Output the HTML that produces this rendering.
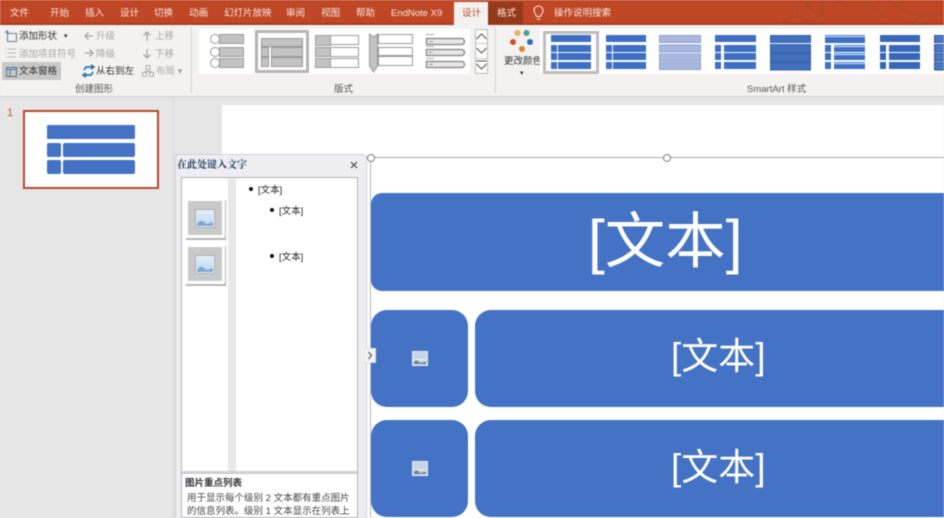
<!DOCTYPE html>
<html lang="zh-CN">
<head>
<meta charset="utf-8">
<title>SmartArt</title>
<style>
html,body{margin:0;padding:0;}
body{width:944px;height:518px;overflow:hidden;position:relative;background:#e6e6e6;font-family:"Liberation Sans","Noto Sans CJK SC",sans-serif;}
#wrap{position:absolute;left:0;top:0;width:944px;height:518px;overflow:hidden;filter:blur(.5px);}
.a{position:absolute;white-space:nowrap;}
.t{position:absolute;top:7px;font-size:9.5px;line-height:13px;color:#fbe6dc;white-space:nowrap;}
.r{position:absolute;font-size:9.5px;line-height:13px;color:#333;white-space:nowrap;}
.g{color:#a8a8a8;}
.lab{position:absolute;top:83px;font-size:9.5px;line-height:13px;color:#555;white-space:nowrap;}
.blk{position:absolute;background:#4472c4;color:#fff;text-align:center;font-family:"Liberation Sans","Noto Sans CJK SC",sans-serif;}
</style>
</head>
<body>
<div id="wrap">
<!-- title bar -->
<div class="a" style="left:0;top:0;width:944px;height:24px;background:#bf4726;"></div>
<div class="a" style="left:0;top:23px;width:944px;height:2px;background:#a63c20;"></div>
<svg class="a" style="left:760px;top:0" width="184" height="24" fill="none" stroke="#ad4829" stroke-width="1.600">
<circle cx="50" cy="8" r="13"/><path d="M46 3l9 9M46 3v6M46 3h6"/><path d="M75 0l12 6h25l12 10M20 24l14-10M128 0l22 14h34M150 24l12-8"/>
</svg>
<div class="a" style="left:454px;top:2px;width:34px;height:23px;background:#f3f2f1;"></div>
<div class="a" style="left:488px;top:2px;width:35px;height:22px;background:#953a1d;"></div>
<div class="t" style="left:10px">文件</div>
<div class="t" style="left:50px">开始</div>
<div class="t" style="left:85px">插入</div>
<div class="t" style="left:120px">设计</div>
<div class="t" style="left:154px">切换</div>
<div class="t" style="left:189px">动画</div>
<div class="t" style="left:224px">幻灯片放映</div>
<div class="t" style="left:286px">审阅</div>
<div class="t" style="left:321px">视图</div>
<div class="t" style="left:356px">帮助</div>
<div class="t" style="left:391px;font-size:9.500px;">EndNote X9</div>
<div class="t" style="left:462px;color:#bf4726">设计</div>
<div class="t" style="left:497px">格式</div>
<svg class="a" style="left:532px;top:5px" width="13" height="16" fill="none" stroke="#fbe6dc" stroke-width="1.100"><path d="M4.500 11.500C4 9 2 8 2 5.500a4.500 4.500 0 0 1 9 0c0 2.500-2 3.500-2.500 6z"/><path d="M5 14h3"/></svg>
<div class="t" style="left:554px">操作说明搜索</div>

<!-- ribbon -->
<div class="a" style="left:0;top:25px;width:944px;height:71px;background:#f3f2f1;"></div>
<div class="a" style="left:0;top:96px;width:944px;height:1px;background:#d2d0ce;"></div>
<div class="a" style="left:191px;top:27px;width:1px;height:66px;background:#d4d4d4;"></div>
<div class="a" style="left:495px;top:27px;width:1px;height:66px;background:#d4d4d4;"></div>
<div class="a" style="left:2px;top:62px;width:59px;height:18px;background:#c8c8c8;"></div>

<svg class="a" style="left:4px;top:29px" width="14" height="50" fill="none" stroke-width="1">
<path d="M3.500 4.500h9v8h-9z" stroke="#6b7f8f"/><path d="M1 3h4M3 1v4" stroke="#3a7ab8"/>
<path d="M1.500 20h1M4 20h8M1.500 24h1M4 24h8M1.500 28h1M4 28h8" stroke="#b5b5b5"/>
<path d="M2.500 38.500h10v9h-10z" stroke="#55707f"/><path d="M2.500 40.500h10M6 41v6" stroke="#3f7cb8"/>
</svg>
<div class="r" style="left:19px;top:30px">添加形状</div>
<div class="r" style="left:64px;top:30px;font-size:7px">▾</div>
<div class="r g" style="left:19px;top:48px">添加项目符号</div>
<div class="r" style="left:19px;top:65px">文本窗格</div>
<svg class="a" style="left:83px;top:29px" width="12" height="30" fill="none" stroke="#a5a5a5" stroke-width="1.300"><path d="M10 7H2M5.500 3.500L2 7l3.500 3.500"/><path d="M2 24h8M6.500 20.500L10 24l-3.500 3.500"/></svg>
<div class="r g" style="left:96px;top:30px">升级</div>
<div class="r g" style="left:96px;top:48px">降级</div>
<svg class="a" style="left:82px;top:64px" width="13" height="15" fill="none" stroke="#2e78b8" stroke-width="1.700"><path d="M12 3H4L2 6M9 1l3 2-3 2"/><path d="M1 11h8l2-3M4 9l-3 2 3 2"/></svg>
<div class="r" style="left:96px;top:65px;color:#333">从右到左</div>
<svg class="a" style="left:142px;top:29px" width="11" height="30" fill="none" stroke="#a5a5a5" stroke-width="1.300"><path d="M5 12V3M1.500 6.500L5 3l3.500 3.500"/><path d="M5 20v9M1.500 25.500L5 29l3.500-3.500"/></svg>
<div class="r g" style="left:155px;top:30px">上移</div>
<div class="r g" style="left:155px;top:48px">下移</div>
<svg class="a" style="left:142px;top:65px" width="12" height="12" fill="none" stroke="#b0b0b0"><path d="M4 .5h4v4H4zM.5 7.500h4v4h-4zM7.500 7.500h4v4h-4zM6 4.500v2M2.500 7.500v-1h7v1"/></svg>
<div class="r g" style="left:156px;top:65px">布局 ▾</div>
<div class="lab" style="left:75px">创建图形</div>
<div class="lab" style="left:334px">版式</div>
<div class="lab" style="left:747px;font-size:9.500px">SmartArt 样式</div>

<!-- layouts gallery -->
<div class="a" style="left:199px;top:29px;width:271px;height:45px;background:#fff;"></div>
<svg class="a" style="left:199px;top:29px" width="271" height="46" stroke="#9a9a9a" stroke-width="1" fill="#c3c3c3">
<g>
<rect x="20.500" y="5.500" width="24" height="9"/><rect x="20.500" y="18.500" width="24" height="9"/><rect x="20.500" y="29.500" width="24" height="9"/>
<circle cx="16" cy="10" r="4.500" fill="#fff"/><circle cx="16" cy="23" r="4.500" fill="#fff"/><circle cx="16" cy="34" r="4.500" fill="#fff"/>
</g>
<rect x="57.500" y="2.500" width="51" height="40" fill="#fff" stroke="#b5b5b5" stroke-width="3"/>
<rect x="62.500" y="9.500" width="41" height="8"/>
<rect x="62.500" y="18.500" width="7" height="9"/><rect x="72.500" y="18.500" width="31" height="9"/>
<rect x="62.500" y="28.500" width="7" height="9"/><rect x="72.500" y="28.500" width="31" height="9"/>
<rect x="116.500" y="6.500" width="15" height="10"/><rect x="116.500" y="18.500" width="15" height="9"/><rect x="116.500" y="29.500" width="15" height="9"/>
<rect x="131.500" y="6.500" width="28" height="9" fill="#fff"/><rect x="131.500" y="18.500" width="28" height="9" fill="#fff"/><rect x="131.500" y="29.500" width="28" height="9" fill="#fff"/>
<path d="M170.500 5l4 3 4-3v32l-4 6-4-6z"/>
<rect x="179.500" y="5.500" width="34" height="9" fill="#fff"/><rect x="179.500" y="18.500" width="34" height="8" fill="#fff"/><rect x="179.500" y="27.500" width="34" height="9" fill="#fff"/>
<g fill="#e8e8e8" stroke="#8f8f8f" stroke-width="1.500">
<path d="M227.500 9.500h35a3 3 0 0 1 0 6h-35zM227.500 20.500h35a3 3 0 0 1 0 6h-35zM227.500 32.500h35a3 3 0 0 1 0 6h-35z"/>
</g>
<path d="M227 5.500h8M227 17.500h8M227 29.500h8" stroke="#aaa"/>
<path d="M230 12.500h4M230 23.500h4M230 35.500h4" stroke="#999"/>
</svg>
<!-- gallery scroller -->
<svg class="a" style="left:475px;top:29px" width="14" height="46" fill="none" stroke="#555" stroke-width="1">
<rect x=".5" y=".5" width="12" height="44" fill="#fbfbfb" stroke="#bcbcbc"/>
<path d="M1 14.500h12M1 29.500h12" stroke="#c9c9c9"/>
<path d="M1.500 10l5-5 5 5M1.500 19l5 5 5-5M1.500 32h10M1.500 35l5 5 5-5"/>
</svg>
<!-- color -->
<svg class="a" style="left:508px;top:27px" width="30" height="26">
<circle cx="9.500" cy="6" r="3" fill="#e8b25c"/><circle cx="18.500" cy="6" r="3" fill="#4fa089"/>
<circle cx="5" cy="15" r="3" fill="#d0502d"/><circle cx="22" cy="15" r="3" fill="#2f6cb4"/>
<circle cx="14" cy="22" r="3" fill="#e2812d"/>
</svg>
<div class="r" style="left:504px;top:55px">更改颜色</div>
<div class="r" style="left:520px;top:67px;font-size:7px">▾</div>

<!-- smartart styles -->
<div class="a" style="left:540px;top:29px;width:404px;height:45px;background:#fff;"></div>
<svg class="a" style="left:540px;top:27px" width="404" height="50">
<rect x="4.500" y="5.500" width="53" height="40" fill="#fff" stroke="#bdbdbd" stroke-width="3"/>
<g fill="#3e6fc4">
<rect x="11" y="8" width="40" height="7"/><rect x="11" y="18" width="6" height="7"/><rect x="18" y="18" width="33" height="7"/><rect x="11" y="26" width="6" height="7"/><rect x="18" y="26" width="33" height="7"/><rect x="11" y="35" width="6" height="7"/><rect x="18" y="35" width="33" height="7"/>
</g>
<g fill="#3e6fc4">
<rect x="66" y="8" width="40" height="7"/><rect x="66" y="18" width="6" height="7"/><rect x="73" y="18" width="33" height="7"/><rect x="66" y="26" width="6" height="7"/><rect x="73" y="26" width="33" height="7"/><rect x="66" y="35" width="6" height="7"/><rect x="73" y="35" width="33" height="7"/>
</g>
<g fill="#a9b8e0" stroke="#8f9fcf">
<rect x="119.500" y="8.500" width="41" height="7"/><rect x="119.500" y="18" width="41" height="7"/><rect x="119.500" y="27" width="41" height="7"/><rect x="119.500" y="35.500" width="41" height="7"/>
</g>
<g fill="#3e6fc4">
<rect x="175" y="8" width="41" height="7"/><rect x="175" y="18" width="6" height="7"/><rect x="184" y="18" width="32" height="7"/><rect x="175" y="26" width="6" height="7"/><rect x="184" y="26" width="32" height="7"/><rect x="175" y="35" width="6" height="7"/><rect x="184" y="35" width="32" height="7"/>
</g>
<g fill="#4170bf" stroke="#3a62a8">
<rect x="230.500" y="8.500" width="40" height="7"/><rect x="230.500" y="17.500" width="40" height="8"/><rect x="230.500" y="26.500" width="40" height="8"/><rect x="230.500" y="35.500" width="40" height="7.500"/>
</g>
<g fill="#3e6fc4">
<rect x="285" y="8" width="40" height="8"/><rect x="285" y="18" width="6" height="7"/><rect x="294" y="18" width="31" height="7"/><rect x="285" y="26" width="6" height="7"/><rect x="294" y="26" width="31" height="7"/><rect x="285" y="35" width="6" height="7"/><rect x="294" y="35" width="31" height="7"/>
</g>
<path d="M285 9.500h40M294 19.500h31M294 27.500h31M294 36.500h31" stroke="#a9cdf2" stroke-width="1.400"/>
<g fill="#3767b8">
<rect x="340" y="8" width="40" height="7"/><rect x="340" y="18" width="6" height="7"/><rect x="349" y="18" width="31" height="7"/><rect x="340" y="26" width="6" height="7"/><rect x="349" y="26" width="31" height="7"/><rect x="340" y="35" width="6" height="7"/><rect x="349" y="35" width="31" height="7"/>
</g>
<g fill="#4a78c4" stroke="#35578f">
<rect x="394.500" y="8.500" width="12" height="7"/><rect x="394.500" y="17.500" width="12" height="7.500"/><rect x="394.500" y="26.500" width="12" height="7.500"/><rect x="394.500" y="35.500" width="12" height="7.500"/>
</g>
</svg>

<!-- workspace -->
<div class="a" style="left:173px;top:97px;width:1px;height:421px;background:#d4d4d4;"></div>
<div class="a" style="left:7px;top:106px;font-size:11px;line-height:14px;color:#c4593a;">1</div>
<div class="a" style="left:23px;top:110px;width:132px;height:75px;background:#fff;border:2px solid #b7472a;"></div>
<div class="a" style="left:47px;top:125px;width:88px;height:14px;background:#4472c4;border-radius:1px;"></div>
<div class="a" style="left:47px;top:143px;width:14px;height:14px;background:#4472c4;border-radius:2px;"></div>
<div class="a" style="left:63px;top:143px;width:72px;height:14px;background:#4472c4;border-radius:2px;"></div>
<div class="a" style="left:47px;top:160px;width:14px;height:14px;background:#4472c4;border-radius:2px;"></div>
<div class="a" style="left:63px;top:160px;width:72px;height:14px;background:#4472c4;border-radius:2px;"></div>

<!-- slide -->
<div class="a" style="left:222px;top:105px;width:722px;height:413px;background:#fff;"></div>
<div class="a" style="left:371px;top:157px;width:573px;height:1px;background:#a9a9a9;"></div>
<div class="a" style="left:370px;top:157px;width:1px;height:361px;background:#b5b5b5;"></div>
<div class="blk" style="left:371px;top:193px;width:573px;height:98px;border-radius:11px 0 0 11px;font-size:60.500px;line-height:96px;text-indent:217px;text-align:left;">[文本]</div>
<div class="blk" style="left:371px;top:310px;width:97px;height:97px;border-radius:16px;"></div>
<div class="blk" style="left:475px;top:310px;width:469px;height:97px;border-radius:16px 0 0 16px;font-size:37px;line-height:94px;text-align:left;text-indent:196px;">[文本]</div>
<div class="blk" style="left:371px;top:420px;width:97px;height:97px;border-radius:16px;"></div>
<div class="blk" style="left:475px;top:420px;width:469px;height:97px;border-radius:16px 0 0 16px;font-size:37px;line-height:95px;text-align:left;text-indent:196px;">[文本]</div>
<svg class="a" style="left:412px;top:351px" width="16" height="15"><rect width="16" height="15" fill="#e6ebf2"/><rect x="1" y="1" width="14" height="13" fill="#c6d4e6"/><path d="M2 11c2-2 3-2 5 0s3 0 7 0v2H2z" fill="#6f7f95"/><rect x="2" y="8" width="12" height="1" fill="#eef2f7"/></svg>
<svg class="a" style="left:412px;top:461px" width="16" height="15"><rect width="16" height="15" fill="#e6ebf2"/><rect x="1" y="1" width="14" height="13" fill="#c6d4e6"/><path d="M2 11c2-2 3-2 5 0s3 0 7 0v2H2z" fill="#6f7f95"/><rect x="2" y="8" width="12" height="1" fill="#eef2f7"/></svg>
<svg class="a" style="left:364px;top:152px" width="310" height="12" fill="#fff" stroke="#7f7f7f"><circle cx="7" cy="6" r="3.500"/><circle cx="303" cy="6" r="3.500"/></svg>

<!-- text pane -->
<div class="a" style="left:175px;top:154px;width:190px;height:364px;background:#eeeef2;border:1px solid #d0d0d4;border-bottom:0;border-radius:3px 3px 0 0;"></div>
<div class="a" style="left:177px;top:159px;font-size:10px;line-height:14px;font-weight:bold;color:#20405f;font-family:'Liberation Serif','Noto Serif CJK SC',serif;">在此处键入文字</div>
<svg class="a" style="left:350px;top:161px" width="8" height="8" stroke="#444" stroke-width="1.200"><path d="M1 1l6 6M7 1L1 7"/></svg>
<div class="a" style="left:181px;top:177px;width:177px;height:341px;background:#fff;border:1px solid #b4b4b4;box-sizing:border-box;"></div>
<div class="a" style="left:228px;top:178px;width:8px;height:293px;background:#e8e8e8;"></div>
<div class="a" style="left:182px;top:471px;width:175px;height:3px;background:#cfcfcf;"></div>
<div class="a" style="left:253px;top:184px;font-size:9.500px;line-height:13px;color:#222;">
<span style="position:absolute;left:-4px;top:3px;width:4px;height:4px;border-radius:50%;background:#111;"></span><span style="position:absolute;left:5px;top:0;">[文本]</span></div>
<div class="a" style="left:273px;top:205px;font-size:9.500px;line-height:13px;color:#222;">
<span style="position:absolute;left:-3px;top:3px;width:4px;height:4px;border-radius:50%;background:#111;"></span><span style="position:absolute;left:6px;top:0;">[文本]</span></div>
<div class="a" style="left:273px;top:251px;font-size:9.500px;line-height:13px;color:#222;">
<span style="position:absolute;left:-3px;top:3px;width:4px;height:4px;border-radius:50%;background:#111;"></span><span style="position:absolute;left:6px;top:0;">[文本]</span></div>
<svg class="a" style="left:184px;top:197px" width="44" height="92">
<defs><linearGradient id="s" x1="0" y1="0" x2="0" y2="1"><stop offset="0" stop-color="#e4eff9"/><stop offset="1" stop-color="#b8d4ee"/></linearGradient></defs>
<g>
<rect x="2" y="3" width="40" height="40" fill="#b5b5b5"/>
<rect x="1" y="1" width="40" height="40" rx="1.500" fill="#fff"/>
<rect x="4" y="4" width="34" height="34" fill="#c9c9c9"/>
<rect x="11.500" y="12.500" width="19" height="18" fill="#e9edf2" stroke="#a5afb9"/>
<rect x="13" y="14" width="16" height="15" fill="url(#s)"/><path d="M13 27c3-4 5-4 8-1s5-2 8 0v3H13z" fill="#7ea6d6"/>
</g>
<g transform="translate(0,46)">
<rect x="2" y="3" width="40" height="40" fill="#b5b5b5"/>
<rect x="1" y="1" width="40" height="40" rx="1.500" fill="#fff"/>
<rect x="4" y="4" width="34" height="34" fill="#c9c9c9"/>
<rect x="11.500" y="12.500" width="19" height="18" fill="#e9edf2" stroke="#a5afb9"/>
<rect x="13" y="14" width="16" height="15" fill="url(#s)"/><path d="M13 27c3-4 5-4 8-1s5-2 8 0v3H13z" fill="#7ea6d6"/>
</g>
</svg>
<div class="a" style="left:185px;top:477px;font-size:9.500px;line-height:13px;font-weight:bold;color:#333;">图片重点列表</div>
<div class="a" style="left:187px;top:491.500px;font-size:9.500px;line-height:13.500px;color:#444;">用于显示每个级别 2 文本都有重点图片<br>的信息列表。级别 1 文本显示在列表上<br>方的独立方框中。</div>
<div class="a" style="left:365px;top:348px;width:11px;height:15px;background:#f4f4f4;border:1px solid #dcdcdc;border-left:0;box-sizing:border-box;"></div>
<svg class="a" style="left:367px;top:351px" width="6" height="9" fill="none" stroke="#555" stroke-width="1.200"><path d="M1.500 1l3 3.500-3 3.500"/></svg>
</div>
</body>
</html>
